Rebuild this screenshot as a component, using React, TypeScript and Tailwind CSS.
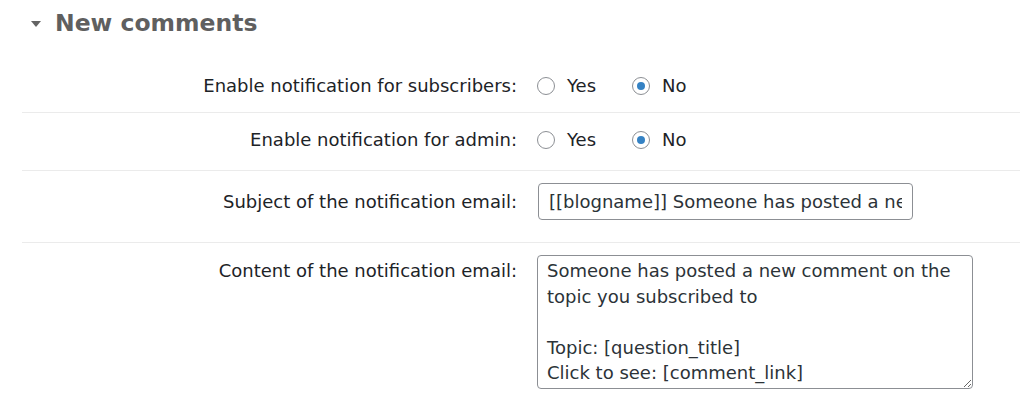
import React from 'react';

const font = { fontFamily: '"DejaVu Sans", Verdana, sans-serif' };

function Radio({ label, checked = false }: { label: string; checked?: boolean }) {
  return (
    <label className="flex items-center gap-3">
      <span className="flex h-[18px] w-[18px] items-center justify-center rounded-full border border-[#8c8f94] bg-white">
        {checked && <span className="h-[8px] w-[8px] rounded-full bg-[#3582c4]" />}
      </span>
      <span>{label}</span>
    </label>
  );
}

function Row({
  label,
  children,
  className,
  labelClass = '',
}: {
  label: string;
  children: React.ReactNode;
  className: string;
  labelClass?: string;
}) {
  return (
    <div className={`flex border-b border-[#ebebeb] ${className}`}>
      <div className={`w-[515px] shrink-0 pr-[20px] text-right ${labelClass}`}>{label}</div>
      <div className="flex-1">{children}</div>
    </div>
  );
}

export default function App() {
  const body =
    'Someone has posted a new comment on the\ntopic you subscribed to\n\nTopic: [question_title]\nClick to see: [comment_link]';

  return (
    <div className="h-[400px] w-[1020px] overflow-hidden bg-white pl-[22px] text-[18px] text-[#1d2327]" style={font}>
      <div className="flex h-[44px] items-center gap-[14px] pl-[9px] pt-[4px]">
        <span className="h-0 w-0 border-x-[5px] border-t-[6px] border-x-transparent border-t-[#646464]" />
        <h2 className="text-[23.5px] font-bold text-[#5f5f5f]">New comments</h2>
      </div>

      <Row label="Enable notification for subscribers:" className="pt-[30px] pb-[14px] leading-[24px]">
        <div className="flex items-center gap-[36px]">
          <Radio label="Yes" />
          <Radio label="No" checked />
        </div>
      </Row>

      <Row label="Enable notification for admin:" className="pt-[15px] pb-[18px] leading-[24px]">
        <div className="flex items-center gap-[36px]">
          <Radio label="Yes" />
          <Radio label="No" checked />
        </div>
      </Row>

      <Row label="Subject of the notification email:" className="items-center pt-[12px] pb-[22px]">
        <input
          readOnly
          value="[[blogname]] Someone has posted a new comment on the topic you subscribed to"
          className="ml-px h-[37px] w-[375px] rounded-[4px] border border-[#8c8f94] px-[10px] text-[18px] text-[#2c3338] outline-none"
          style={font}
        />
      </Row>

      <Row
        label="Content of the notification email:"
        className="pt-[12px] pb-[20px] leading-[25.5px]"
        labelClass="pt-[3px]"
      >
        <textarea
          readOnly
          value={body}
          wrap="off"
          className="block h-[134px] w-[436px] resize overflow-hidden whitespace-pre rounded-[4px] border border-[#8c8f94] px-[9px] pt-[2px] text-[18px] leading-[25.5px] text-[#2c3338] outline-none"
          style={font}
        />
      </Row>
    </div>
  );
}
